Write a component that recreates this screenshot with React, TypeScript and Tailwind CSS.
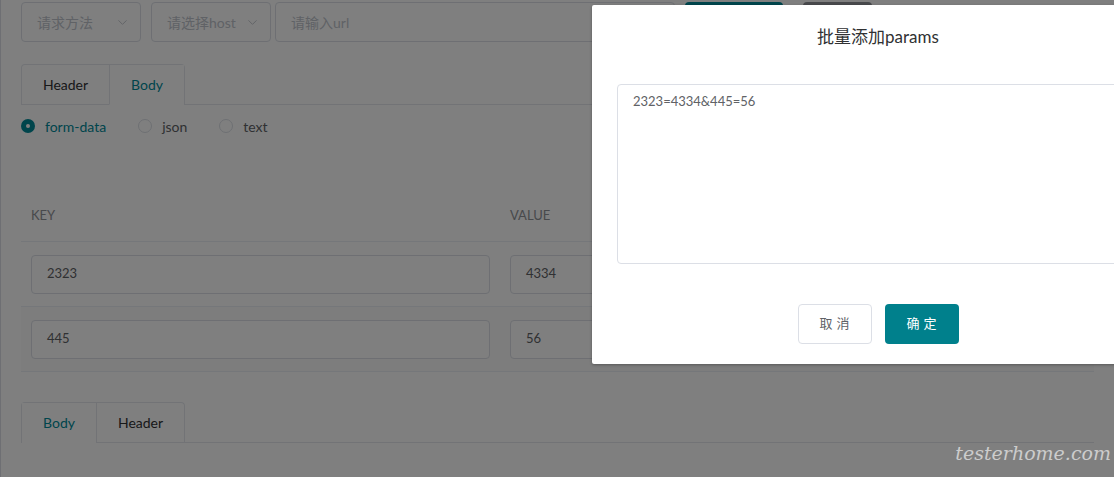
import React from 'react';
import { ChevronDown } from 'lucide-react';

const FONT = "font-['Lato','Noto_Sans_CJK_SC',sans-serif]";

const Radio: React.FC<{ label: string; checked?: boolean }> = ({ label, checked }) => (
  <label className="flex items-center gap-[10px]">
    {checked ? (
      <span className="w-[14px] h-[14px] rounded-full bg-[#008a99] flex items-center justify-center">
        <span className="w-[4px] h-[4px] rounded-full bg-white" />
      </span>
    ) : (
      <span className="w-[14px] h-[14px] rounded-full border border-[#dcdfe6] bg-white" />
    )}
    <span className={`text-[14px] ${checked ? 'text-[#008a99]' : 'text-[#606266]'}`}>{label}</span>
  </label>
);

const Tabs: React.FC<{ items: string[]; active: string; widths: string[] }> = ({ items, active, widths }) => (
  <div className="flex border-b border-[#e4e7ed]">
    <div className="flex border border-b-0 border-[#e4e7ed] rounded-t-[4px] -mb-px">
      {items.map((t, i) => (
        <div
          key={t}
          className={`h-[40px] flex items-center justify-center text-[14px] ${widths[i]} ${i > 0 ? 'border-l border-[#e4e7ed]' : ''} ${
            t === active ? 'text-[#008a99] bg-white border-b border-b-white' : 'text-[#303133] border-b border-b-[#e4e7ed]'
          }`}
        >
          {t}
        </div>
      ))}
    </div>
  </div>
);

const ParamRow: React.FC<{ k: string; v: string; striped?: boolean }> = ({ k, v, striped }) => (
  <div className={`flex h-[65px] items-center border-b border-[#ebeef5] ${striped ? 'bg-[#fafafa]' : 'bg-white'}`}>
    <div className="w-[479px] px-[10px]">
      <div className="h-[39px] border border-[#dcdfe6] rounded-[4px] bg-white flex items-center px-[15px] text-[13px] text-[#606266]">{k}</div>
    </div>
    <div className="flex-1 px-[10px]">
      <div className="h-[39px] border border-[#dcdfe6] rounded-[4px] bg-white flex items-center px-[15px] text-[13px] text-[#606266]">{v}</div>
    </div>
  </div>
);

export default function App() {
  return (
    <div className={`relative w-[1114px] h-[477px] overflow-hidden bg-white ${FONT}`}>
      {/* page under the mask */}
      <div className="h-full border-l border-[#dcdfe6] pl-[20px] pr-[20px]">
        <div className="flex items-center pt-[2px] h-[42px]">
          <div className="w-[120px] h-[40px] border border-[#dcdfe6] rounded-[4px] flex items-center justify-between pl-[15px] pr-[10px] text-[14px] text-[#c0c4cc]">
            <span>请求方法</span>
            <ChevronDown size={15} strokeWidth={1.5} />
          </div>
          <div className="ml-[10px] w-[120px] h-[40px] border border-[#dcdfe6] rounded-[4px] flex items-center justify-between pl-[15px] pr-[10px] text-[14px] text-[#c0c4cc]">
            <span>请选择host</span>
            <ChevronDown size={15} strokeWidth={1.5} />
          </div>
          <div className="ml-[4px] w-[400px] h-[40px] border border-[#dcdfe6] rounded-[4px] flex items-center px-[15px] text-[14px] text-[#c0c4cc]">
            请输入url
          </div>
          <div className="ml-[10px] w-[98px] h-[40px] rounded-[4px] bg-[#008a99]" />
          <div className="ml-[20px] w-[69px] h-[40px] rounded-[4px] bg-[#909399]" />
        </div>

        <div className="mt-[22px]">
          <Tabs items={['Header', 'Body']} active="Body" widths={['w-[87px]', 'w-[75px]']} />
        </div>

        <div className="flex items-center gap-[30px] h-[20px] mt-[11px]">
          <Radio label="form-data" checked />
          <div className="ml-[2px]"><Radio label="json" /></div>
          <div className="ml-[2px]"><Radio label="text" /></div>
        </div>

        <div className="mt-[55px]">
          <div className="flex h-[51px] items-center border-b border-[#ebeef5] text-[13px] text-[#909399]">
            <div className="w-[479px] px-[10px]">KEY</div>
            <div className="flex-1 px-[10px]">VALUE</div>
          </div>
          <ParamRow k="2323" v="4334" />
          <ParamRow k="445" v="56" striped />
        </div>

        <div className="mt-[30px]">
          <Tabs items={['Body', 'Header']} active="Body" widths={['w-[74px]', 'w-[88px]']} />
        </div>
      </div>

      {/* mask */}
      <div className="absolute inset-0 bg-black/50" />

      {/* dialog */}
      <div className="absolute left-[592px] top-[5px] w-[572px] h-[359px] bg-white rounded-[2px] shadow-[0_1px_3px_rgba(0,0,0,0.3)] flex flex-col">
        <div className="h-[64px] flex items-center justify-center text-[17px] text-[#303133]">批量添加params</div>
        <div className="px-[25px] pt-[15px]">
          <div className="h-[180px] border border-[#dcdfe6] rounded-[4px] px-[15px] pt-[6px] text-[13px] leading-[20px] text-[#606266]">
            2323=4334&amp;445=56
          </div>
        </div>
        <div className="flex justify-center gap-[13px] mt-[40px]">
          <button className="w-[74px] h-[40px] border border-[#dcdfe6] rounded-[4px] bg-white text-[13px] text-[#606266] tracking-[4px] pl-[4px]">
            取消
          </button>
          <button className="w-[74px] h-[40px] rounded-[4px] bg-[#00808c] text-[13px] text-white tracking-[4px] pl-[4px]">
            确定
          </button>
        </div>
      </div>

      {/* watermark */}
      <div className="absolute right-[3px] bottom-[10px] text-[19px] italic text-[#cccccc] font-['DejaVu_Serif',serif]">
        testerhome.com
      </div>
    </div>
  );
}
